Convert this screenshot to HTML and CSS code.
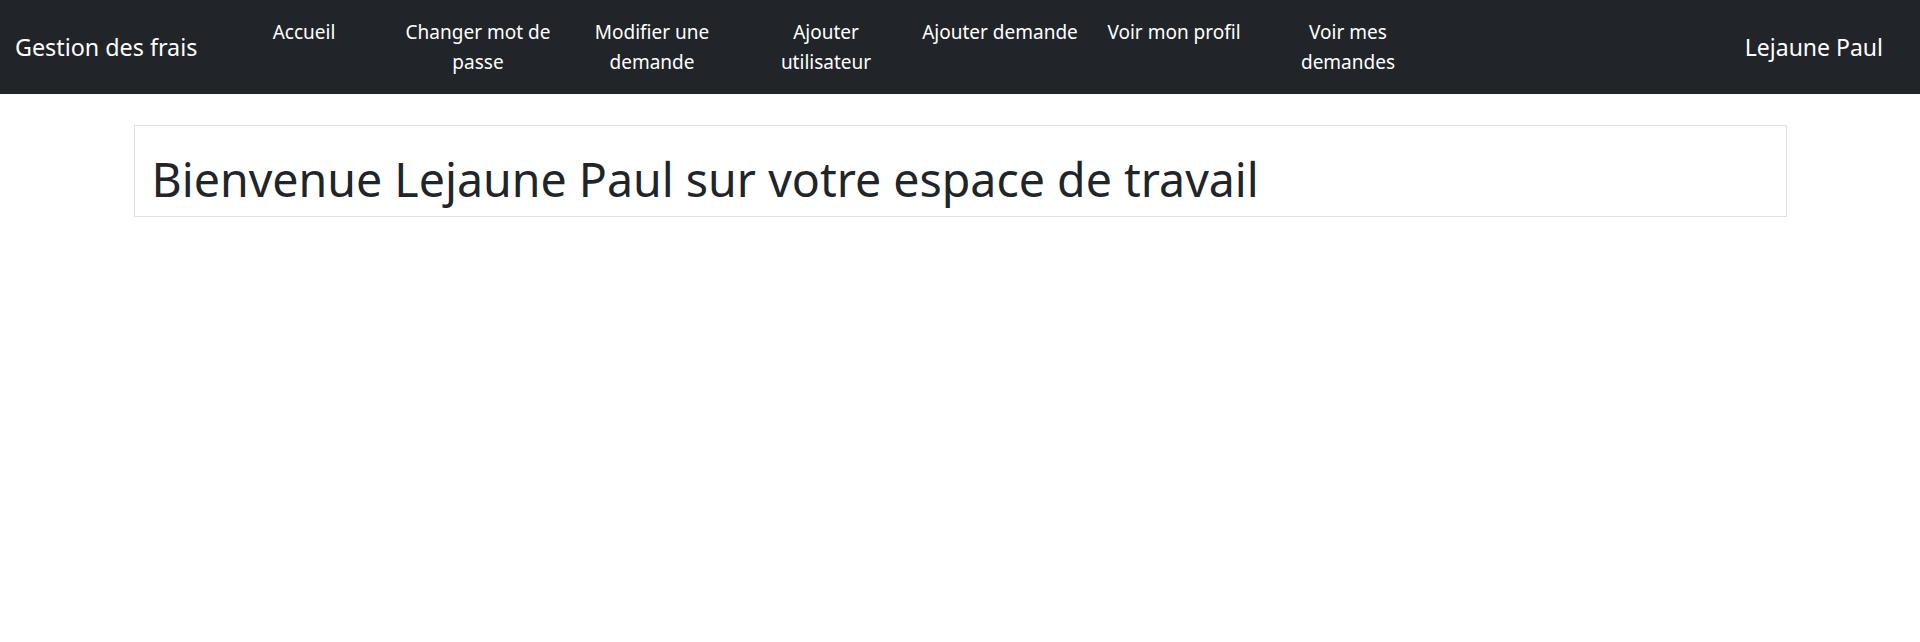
FILE: index.html
```html
<!DOCTYPE html>
<html lang="fr">
<head>
<meta charset="utf-8">
<title>Gestion des frais</title>
<link rel="stylesheet" href="styles.css">
</head>
<body>
<nav class="navbar">
  <a class="brand" href="#">Gestion des frais</a>
  <ul class="nav">
    <li><a href="#">Accueil</a></li>
    <li><a href="#">Changer mot de passe</a></li>
    <li><a href="#">Modifier une demande</a></li>
    <li><a href="#">Ajouter utilisateur</a></li>
    <li><a href="#">Ajouter demande</a></li>
    <li><a href="#">Voir mon profil</a></li>
    <li><a href="#">Voir mes demandes</a></li>
  </ul>
  <span class="user">Lejaune Paul</span>
</nav>
<main class="container">
  <h1>Bienvenue Lejaune Paul sur votre espace de travail</h1>
</main>
</body>
</html>
```

FILE: styles.css
```css
* { box-sizing: border-box; }
body {
  margin: 0;
  font-family: "Noto Sans", "Open Sans", sans-serif;
  color: #212529;
  background: #fff;
}
a { text-decoration: none; color: inherit; }
.navbar {
  display: flex;
  align-items: center;
  height: 94px;
  padding: 0 37px 0 15px;
  background: #212529;
  color: #fff;
}
.brand {
  width: 202px;
  font-size: 23.3px;
  line-height: 30px;
  white-space: nowrap;
}
.nav {
  display: flex;
  align-self: flex-start;
  margin: 0;
  padding: 18px 0 0;
  list-style: none;
  font-size: 19px;
  line-height: 29.5px;
}
.nav li {
  width: 174px;
  text-align: center;
  padding: 0 8px;
}
.nav li:nth-child(2) {
  padding: 0 12px;
}
.user {
  margin-left: auto;
  font-size: 23px;
  line-height: 30px;
}
.container {
  width: 1653px;
  margin: 31px auto 0;
  border: 1px solid #dee2e6;
  padding: 23px 15px 7px 17px;
}
.container h1 {
  margin: 0;
  font-size: 46.5px;
  font-weight: 400;
  line-height: 60px;
}
```
